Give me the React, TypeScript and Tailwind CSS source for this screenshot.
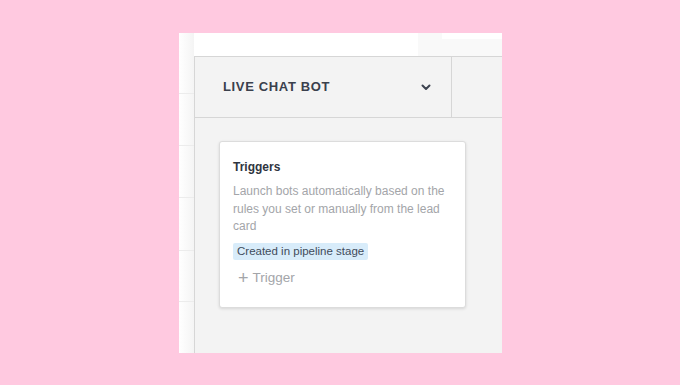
import React from "react";

function Chevron() {
  return (
    <svg width="10" height="7" viewBox="0 0 10 7" fill="none">
      <path d="M1.5 1.5 L5 5 L8.5 1.5" stroke="#3d4350" strokeWidth="2" strokeLinecap="round" strokeLinejoin="round" />
    </svg>
  );
}

export default function App() {
  return (
    <div className="w-[680px] h-[385px] bg-[#ffc9e0] pt-[33px] pl-[179px]" style={{ fontFamily: "'Liberation Sans', Arial, sans-serif" }}>
      <div className="w-[323px] h-[320px] bg-white flex overflow-hidden">
        {/* left list strip */}
        <div className="w-[15px] flex flex-col pt-[60px] bg-gradient-to-r from-white to-[#f4f4f4]">
          <div className="h-[52px] border-t border-[#ececec]" />
          <div className="h-[53px] border-t border-[#ececec]" />
          <div className="h-[53px] border-t border-[#ececec]" />
          <div className="h-[52px] border-t border-[#ececec]" />
          <div className="h-[52px] border-t border-[#ececec]" />
        </div>

        <div className="flex-1 flex flex-col">
          <div className="h-[23px] flex">
            <div className="w-[224px]" />
            <div className="flex-1 bg-[#f9f9f9] flex flex-col">
              <div className="h-[6px] ml-[24px] bg-white" />
            </div>
          </div>

          <div className="flex-1 flex flex-col border-l border-t border-[#d6d6d6] bg-[#f3f3f3]">
            <div className="h-[61px] flex border-b border-[#d6d6d6]">
              <div className="w-[257px] border-r border-[#d6d6d6] flex items-center justify-between pl-[28px] pr-[20px]">
                <span className="text-[13px] font-bold tracking-[0.05em] text-[#3a404c] pb-[1px]">LIVE CHAT BOT</span>
                <Chevron />
              </div>
              <div className="flex-1" />
            </div>

            <div className="pl-[24px] pt-[23px]">
              <div className="w-[247px] h-[167px] bg-white rounded-[3px] border border-[#dcdcdc] shadow-[0_1px_3px_rgba(0,0,0,0.12)] pl-[13px] pr-[10px] pt-[16px]">
                <div className="text-[12px] font-bold text-[#2f3540] leading-[18px]">Triggers</div>
                <p className="mt-[7px] text-[12px] leading-[17.5px] text-[#a3a5a9]">
                  Launch bots automatically based on the rules you set or manually from the lead card
                </p>
                <span className="inline-block mt-[7px] px-[4px] h-[17px] leading-[17px] rounded-[2px] bg-[#d8ecfa] text-[11.5px] text-[#3f4b5a]">
                  Created in pipeline stage
                </span>
                <div className="mt-[6px] pl-[5px] flex items-center gap-[4px] text-[13.5px] text-[#a3a5a9] leading-[20px]">
                  <span className="text-[18px] font-light leading-[20px]">+</span>
                  <span>Trigger</span>
                </div>
              </div>
            </div>
          </div>
        </div>
      </div>
    </div>
  );
}
